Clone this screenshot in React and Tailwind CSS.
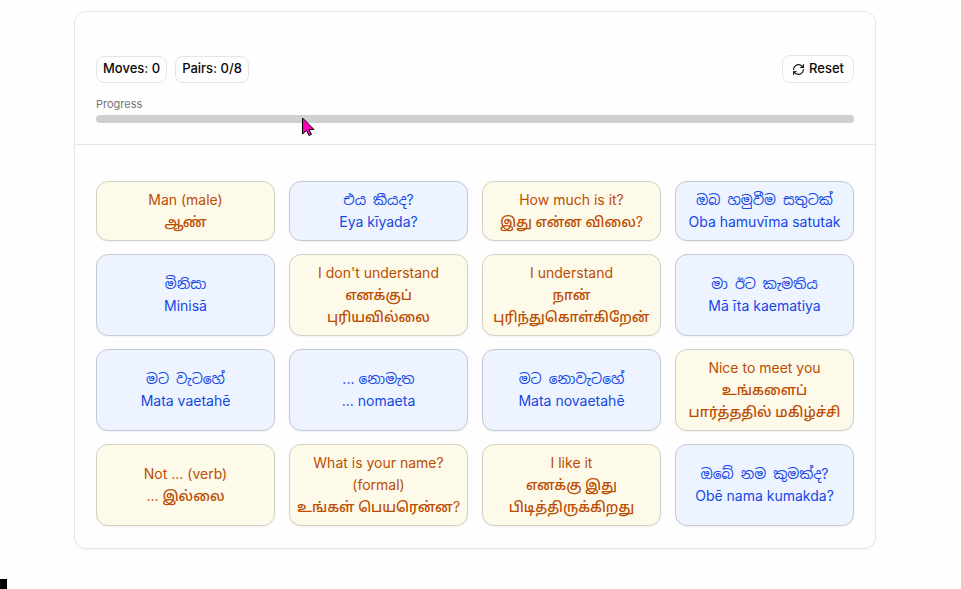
import React, { useState } from 'react';
import { RefreshCw } from 'lucide-react';

const CARDS = [
  { id: 1, kind: 'source', lines: ['Man (male)', 'ஆண்'] },
  { id: 2, kind: 'target', lines: ['එය කීයද?', 'Eya kīyada?'] },
  { id: 3, kind: 'source', lines: ['How much is it?', 'இது என்ன விலை?'] },
  { id: 4, kind: 'target', lines: ['ඔබ හමුවීම සතුටක්', 'Oba hamuvīma satutak'] },
  { id: 5, kind: 'target', lines: ['මිනිසා', 'Minisā'] },
  { id: 6, kind: 'source', lines: ["I don't understand", 'எனக்குப்', 'புரியவில்லை'] },
  { id: 7, kind: 'source', lines: ['I understand', 'நான்', 'புரிந்துகொள்கிறேன்'] },
  { id: 8, kind: 'target', lines: ['මා ඊට කැමතිය', 'Mā īta kaematiya'] },
  { id: 9, kind: 'target', lines: ['මට වැටහේ', 'Mata vaetahē'] },
  { id: 10, kind: 'target', lines: ['... නොමැත', '... nomaeta'] },
  { id: 11, kind: 'target', lines: ['මට නොවැටහේ', 'Mata novaetahē'] },
  { id: 12, kind: 'source', lines: ['Nice to meet you', 'உங்களைப்', 'பார்த்ததில் மகிழ்ச்சி'] },
  { id: 13, kind: 'source', lines: ['Not ... (verb)', '... இல்லை'] },
  { id: 14, kind: 'source', lines: ['What is your name?', '(formal)', 'உங்கள் பெயரென்ன?'] },
  { id: 15, kind: 'source', lines: ['I like it', 'எனக்கு இது', 'பிடித்திருக்கிறது'] },
  { id: 16, kind: 'target', lines: ['ඔබේ නම කුමක්ද?', 'Obē nama kumakda?'] }
];

const CARD_STYLES = {
  source: 'bg-[#fefaea] text-[#bb4d00] border-[#d2cfc3]',
  target: 'bg-[#edf4ff] text-[#1447e6] border-[#c3c9d5]'
};

// Tamil needs a heavier face to sit well next to Latin text
const scriptStyle = (run) => {
  if (/[\u0B80-\u0BFF]/.test(run)) return "font-medium font-['Noto_Sans_Tamil','Inter',sans-serif]";
  if (/[\u0D80-\u0DFF]/.test(run)) return "font-['Noto_Sans_Sinhala','Inter',sans-serif]";
  return '';
};

// Splits a line into Tamil/Sinhala words and the Latin text around them
const splitRuns = (line) =>
  line.split(/([\u0B80-\u0BFF\u0D80-\u0DFF\u200D]+(?: [\u0B80-\u0BFF\u0D80-\u0DFF\u200D]+)*)/).filter(Boolean);

const Badge = ({ children }) => (
  <span className="h-[27px] px-1.5 flex items-center rounded-lg border border-[#e5e5e5] text-[13px] font-medium text-[#0a0a0a] whitespace-nowrap">
    {children}
  </span>
);

const MatchCard = ({ card, isSelected, onSelect }) => (
  <button
    type="button"
    aria-pressed={isSelected}
    onClick={() => onSelect(card.id)}
    className={`min-w-0 py-[7px] flex flex-col items-center justify-center rounded-xl border shadow-xs whitespace-nowrap cursor-pointer ${CARD_STYLES[card.kind]}`}
  >
    {card.lines.map((line) => (
      <span key={line} className="h-[22px] text-sm leading-[22px]">
        {splitRuns(line).map((run) => (
          <span key={run} className={scriptStyle(run)}>{run}</span>
        ))}
      </span>
    ))}
  </button>
);

export default function App() {
  const [selected, setSelected] = useState(null);
  const matched = 0;
  const total = CARDS.length / 2;

  return (
    <div className="relative min-h-screen bg-[#fefefe] pt-[11px] pb-10 pl-[74px] pr-[85px] font-['Inter','Noto_Sans',sans-serif]">
      <main className="rounded-xl border border-[#e5e5e5] shadow-xs">
        <header className="px-[21px] pt-[43px] pb-[21px] border-b border-[#e5e5e5]">
          <div className="flex items-center justify-between">
            <div className="flex gap-2">
              <Badge>Moves: 0</Badge>
              <Badge>Pairs: {matched}/{total}</Badge>
            </div>
            <button
              type="button"
              onClick={() => setSelected(null)}
              className="h-7 px-[9px] flex items-center gap-1 rounded-lg border border-[#e5e5e5] text-[13px] font-medium text-[#0a0a0a] cursor-pointer"
            >
              <RefreshCw className="w-[13px] h-[13px]" aria-hidden="true" />
              Reset
            </button>
          </div>

          <div className="mt-[13px]">
            <p id="progress-label" className="text-[11px] leading-4 text-[#737373]">Progress</p>
            <div
              role="progressbar"
              aria-labelledby="progress-label"
              aria-valuenow={matched}
              aria-valuemax={total}
              className="mt-[3px] h-2 rounded-sm bg-[#d0d0d0] overflow-hidden"
            >
              <div className="h-full bg-[#171717]" style={{ width: `${(matched / total) * 100}%` }} />
            </div>
          </div>
        </header>

        <section className="px-[21px] pt-9 pb-[22px] grid grid-cols-4 gap-x-3.5 gap-y-[13px]">
          {CARDS.map((card) => (
            <MatchCard
              key={card.id}
              card={card}
              isSelected={selected === card.id}
              onSelect={setSelected}
            />
          ))}
        </section>
      </main>

      {/* Pointer */}
      <svg
        className="absolute left-[302px] top-[117px] w-[13px] h-[20px] pointer-events-none"
        viewBox="0 0 13 20"
        aria-hidden="true"
      >
        <path d="M.5 1v16l4-3.500 2.500 5 2.500-1.200-2.500-4.800h5z" fill="#ff00b8" stroke="#000" />
      </svg>

      {/* Corner marker */}
      <div className="absolute left-0 bottom-0 w-[7px] h-2.5 bg-black" />
    </div>
  );
}
